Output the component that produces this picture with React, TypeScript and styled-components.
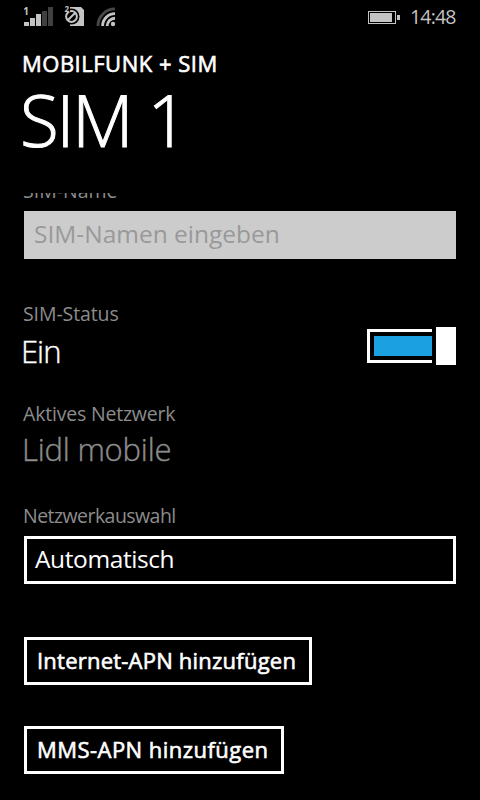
import React from "react";
import styled, { createGlobalStyle } from "styled-components";

const GlobalStyle = createGlobalStyle`
  * { box-sizing: border-box; }
  html, body { margin: 0; background: #000; }
  body { font-family: "Open Sans", sans-serif; color: #fff; overflow: hidden; }
`;

const Screen = styled.div`
  width: 480px;
  height: 800px;
  background: #000;
  overflow: hidden;
  display: flex;
  flex-direction: column;
`;

const StatusBar = styled.header`
  height: 34px;
  flex: none;
  display: flex;
  justify-content: space-between;
  padding: 0 24px;
  color: #c4c4c4;
`;

const StatusGroup = styled.div`
  display: flex;
  width: 88px;
  height: 34px;
`;

const Line = styled.span<{
  $size: number;
  $weight?: number;
  $spacing?: number;
  $height: number;
  $color?: string;
  $stroke?: number;
}>`
  display: block;
  white-space: pre;
  font-size: ${(p) => p.$size}px;
  font-weight: ${(p) => p.$weight ?? 400};
  letter-spacing: ${(p) => p.$spacing ?? 0}px;
  line-height: ${(p) => p.$height}px;
  height: ${(p) => p.$height}px;
  color: ${(p) => p.$color ?? "#fff"};
  -webkit-text-stroke: ${(p) => p.$stroke ?? 0}px currentColor;
`;

const PageHeader = styled.div`
  flex: none;
  height: 159px;
  padding: 13px 22px 0;
`;

const PageTitle = styled.div`
  margin-left: -2px;
`;

const Content = styled.main`
  flex: 1;
  min-height: 0;
  overflow: hidden;
  padding: 0 24px;
`;

const NameLabel = styled.div`
  height: 18px;
  overflow: hidden;
  display: flex;
  align-items: flex-end;
  padding-bottom: 6px;
  margin-left: -1px;
`;

const NameInput = styled.div`
  height: 48px;
  background: #ccc;
  padding: 0 10px;
`;

const Section = styled.section<{ $top: number }>`
  margin-top: ${(p) => p.$top}px;
`;

const Label = styled.div`
  height: 28px;
  margin-left: -1px;
`;

const StatusRow = styled.div`
  display: flex;
  justify-content: space-between;
  align-items: flex-start;
  height: 46px;
  margin-top: -1px;
  margin-left: -3px;
`;

const Toggle = styled.div`
  display: flex;
  align-items: center;
  gap: 4px;
  width: 89px;
  height: 38px;
`;

const Track = styled.div`
  width: 65px;
  height: 34px;
  border: 3px solid #fff;
  border-right: 0;
  padding: 4px 0 4px 4px;
`;

const Fill = styled.div`
  height: 20px;
  background: #1ba1e2;
`;

const Thumb = styled.div`
  width: 20px;
  height: 38px;
  background: #fff;
`;

const Value = styled.div`
  height: 48px;
  margin-top: -2px;
  margin-left: -2px;
`;

const Picker = styled.div`
  height: 48px;
  border: 3px solid #fff;
  padding: 0 8px;
`;

const OutlineButton = styled.button<{ $width: number; $top: number }>`
  display: block;
  width: ${(p) => p.$width}px;
  height: 48px;
  margin: ${(p) => p.$top}px 0 0;
  padding: 0 0 2px 10px;
  border: 3px solid #fff;
  background: #000;
  color: #fff;
  font-family: inherit;
  text-align: left;
`;

const StatusIcons = () => (
  <svg width="96" height="34" viewBox="24 0 96 34">
    <text x="23.2" y="14.5" fontSize="10" fontWeight="700" fill="#c4c4c4">1</text>
    <path d="M24 22h5v4h-5zM30 18h5v8h-5zM36 14h5v12h-5z" fill="#c4c4c4" />
    <path d="M42 11h5v15h-5zM48 7h5v19h-5z" fill="#404040" />
    <path d="M70 7h11l3 3v16H70z" fill="#c4c4c4" />
    <circle cx="71.5" cy="16.5" r="8" fill="#000" />
    <circle cx="71.5" cy="16.5" r="5.4" fill="none" stroke="#c4c4c4" strokeWidth="2" />
    <path d="M67.7 20.3 L75.3 12.7" stroke="#c4c4c4" strokeWidth="2" />
    <path d="M64 4h6v8h-6z" fill="#000" />
    <text x="64.4" y="11.6" fontSize="8" fontWeight="700" fill="#c4c4c4">2</text>
    <g fill="none" strokeWidth="2.9">
      <path d="M97.9 26A17.1 17.1 0 0 1 115 8.9" stroke="#484848" />
      <path d="M102.6 26A12.4 12.4 0 0 1 115 13.6" stroke="#c4c4c4" />
      <path d="M107.2 26A7.8 7.8 0 0 1 115 18.2" stroke="#c4c4c4" />
    </g>
    <circle cx="113" cy="24" r="2.2" fill="#c4c4c4" />
  </svg>
);

const Battery = () => (
  <svg width="42" height="34" viewBox="368 0 42 34">
    <rect x="368.5" y="11.5" width="27" height="12" fill="none" stroke="#c4c4c4" />
    <path d="M370 13h22v9h-22zM397 15h3v5h-3z" fill="#c4c4c4" />
  </svg>
);

const GRAY = "#8c8c8c";

export default function App() {
  return (
    <Screen>
      <GlobalStyle />
      <StatusBar>
        <StatusIcons />
        <StatusGroup>
          <Battery />
          <Line $size={19.5} $height={34} $spacing={-0.8} $color="#c4c4c4">14:48</Line>
        </StatusGroup>
      </StatusBar>
      <PageHeader>
        <Line $size={22} $stroke={0.6} $spacing={0.5} $height={32}>MOBILFUNK + SIM</Line>
        <PageTitle>
          <Line $size={71} $weight={300} $stroke={1} $spacing={-2.2} $height={82}>SIM 1</Line>
        </PageTitle>
      </PageHeader>
      <Content>
        <NameLabel>
          <Line $size={19.5} $height={28} $color={GRAY}>SIM-Name</Line>
        </NameLabel>
        <NameInput>
          <Line $size={24.5} $height={46} $color="#999">SIM-Namen eingeben</Line>
        </NameInput>
        <Section $top={41}>
          <Label><Line $size={19.5} $height={28} $spacing={-0.1} $color={GRAY}>SIM-Status</Line></Label>
          <StatusRow>
            <Line $size={31} $weight={300} $stroke={0.4} $spacing={-1} $height={48}>Ein</Line>
            <Toggle>
              <Track><Fill /></Track>
              <Thumb />
            </Toggle>
          </StatusRow>
        </Section>
        <Section $top={27}>
          <Label><Line $size={19.5} $height={28} $spacing={-0.2} $color={GRAY}>Aktives Netzwerk</Line></Label>
          <Value><Line $size={31} $weight={300} $stroke={0.4} $spacing={-0.2} $height={46} $color={GRAY}>Lidl mobile</Line></Value>
        </Section>
        <Section $top={28}>
          <Label><Line $size={19.5} $height={28} $spacing={-0.55} $color={GRAY}>Netzwerkauswahl</Line></Label>
        </Section>
        <Section $top={6}>
          <Picker><Line $size={24.5} $height={40} $spacing={-0.4}>Automatisch</Line></Picker>
        </Section>
        <OutlineButton $width={288} $top={53}>
          <Line $size={22} $stroke={0.6} $spacing={0.22} $height={40}>Internet-APN hinzufügen</Line>
        </OutlineButton>
        <OutlineButton $width={260} $top={41}>
          <Line $size={22} $stroke={0.6} $spacing={0.46} $height={40}>MMS-APN hinzufügen</Line>
        </OutlineButton>
      </Content>
    </Screen>
  );
}
